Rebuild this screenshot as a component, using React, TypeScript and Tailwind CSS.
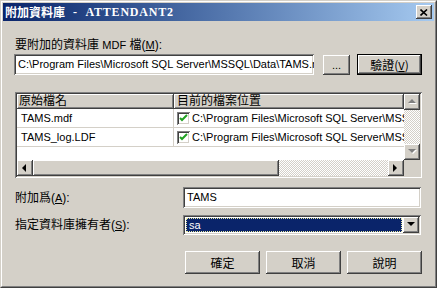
import React from "react";

const raised =
  "bg-[#d4d0c8] shadow-[inset_-1px_-1px_0_#404040,inset_1px_1px_0_#ffffff,inset_-2px_-2px_0_#808080]";
const sunken =
  "shadow-[inset_1px_1px_0_#808080,inset_-1px_-1px_0_#ffffff,inset_2px_2px_0_#404040,inset_-2px_-2px_0_#d4d0c8]";
const checker =
  "bg-[image:repeating-conic-gradient(#ffffff_0_25%,#d4d0c8_0_50%)] bg-[length:2px_2px]";

const font = { fontFamily: '"Liberation Sans", "Noto Sans CJK TC", sans-serif' };

function Arrow({ dir, gray }: { dir: "up" | "down" | "left" | "right"; gray?: boolean }) {
  const pts: Record<string, string> = {
    up: "0,4 4,0 8,4",
    down: "0,0 8,0 4,4",
    left: "4,0 4,8 0,4",
    right: "0,0 0,8 4,4",
  };
  const w = dir === "up" || dir === "down" ? 8 : 5;
  const h = dir === "up" || dir === "down" ? 5 : 8;
  return (
    <svg width={w + 1} height={h + 1} viewBox={`0 0 ${w + 1} ${h + 1}`}>
      {gray && <polygon points={pts[dir]} fill="#ffffff" transform="translate(1,1)" />}
      <polygon points={pts[dir]} fill={gray ? "#808080" : "#000000"} />
    </svg>
  );
}

function Check() {
  return (
    <div className={`w-[13px] h-[13px] bg-white ${sunken} flex items-center justify-center shrink-0`}>
      <svg width="9" height="9" viewBox="0 0 9 9">
        <path d="M1 4 L3 6 L8 1" stroke="#21a121" strokeWidth="2" fill="none" />
      </svg>
    </div>
  );
}

export default function App() {
  const path = "C:\\Program Files\\Microsoft SQL Server\\MSSQL\\Data\\TAMS.mdf";
  return (
    <div
      className="w-[437px] h-[288px] bg-[#d4d0c8] border border-t-[#d4d0c8] border-l-[#d4d0c8] border-b-[#404040] border-r-[#404040] text-[12px] text-black overflow-hidden"
      style={font}
    >
      <div className="h-full border border-t-white border-l-white border-b-[#808080] border-r-[#808080] p-[1px]">
        {/* Title bar */}
        <div className="h-[18px] bg-linear-to-r from-[#0a246a] to-[#a6caf0] flex items-center pl-[2px] pr-[2px]">
          <span className="text-white font-bold text-[12px] leading-[18px] whitespace-nowrap" style={{ fontFamily: '"Noto Sans CJK TC", sans-serif' }}>
            附加資料庫
          </span>
          <span className="text-white font-bold text-[12px] leading-[18px] whitespace-nowrap ml-[8px] tracking-[0.8px]" style={{ fontFamily: '"Liberation Serif", serif' }}>
            -&nbsp;&nbsp;ATTENDANT2
          </span>
          <div className="flex-1" />
          <div className={`w-[16px] h-[14px] ${raised} flex items-center justify-center`}>
            <svg width="8" height="7" viewBox="0 0 8 7">
              <path d="M0.5 0.5 L7 6.5 M7 0.5 L0.5 6.5" stroke="#000" strokeWidth="1.6" />
            </svg>
          </div>
        </div>

        <div className="pl-[11px]">
          {/* label */}
          <div className="mt-[17px] pl-[1px] leading-[14px] h-[14px] whitespace-nowrap">
            要附加的資料庫 <span className="text-[11px]">MDF</span> 檔(<span className="underline text-[11px]">M</span>):
          </div>
          {/* path row */}
          <div className="mt-[2px] flex items-start">
            <div className={`w-[300px] h-[21px] bg-white ${sunken} overflow-hidden whitespace-nowrap pl-[4px] pt-[3px] leading-[15px] text-[11px]`}>
              {path}
            </div>
            <div className={`ml-[9px] mt-[1px] w-[27px] h-[20px] ${raised} flex items-center justify-center leading-[14px] text-[11px]`}>
              ...
            </div>
            <div className="ml-[7px] w-[65px] h-[21px] border border-black">
              <div className={`w-full h-full ${raised} flex items-center justify-center leading-[14px]`} style={{ fontFamily: '"Noto Sans CJK TC", "Liberation Sans", sans-serif' }}>
                驗證(<span className="underline text-[11px]">V</span>)
              </div>
            </div>
          </div>

          {/* list */}
          <div className={`mt-[17px] ml-[1px] w-[407px] h-[86px] bg-white ${sunken} p-[2px] flex flex-col`}>
            <div className="flex flex-1 min-h-0">
              <div className="flex-1 flex flex-col min-w-0 overflow-hidden">
                {/* header */}
                <div className="flex h-[15px] shrink-0">
                  <div className={`w-[157px] h-full ${raised} pl-[2px] leading-[15px] whitespace-nowrap`}>原始檔名</div>
                  <div className={`flex-1 h-full ${raised} pl-[3px] leading-[15px] whitespace-nowrap`}>目前的檔案位置</div>
                </div>
                {["TAMS.mdf", "TAMS_log.LDF"].map((n) => (
                  <div key={n} className="flex h-[19px] shrink-0 border-b border-[#d4d0c8] text-[11px]">
                    <div className="w-[157px] h-full border-r border-[#d4d0c8] pl-[4px] leading-[18px] whitespace-nowrap">{n}</div>
                    <div className="flex-1 h-full flex items-center pl-[3px] overflow-hidden whitespace-nowrap">
                      <Check />
                      <span className="ml-[2px] leading-[18px]">C:\Program Files\Microsoft SQL Server\MSSQL\Data\{n}</span>
                    </div>
                  </div>
                ))}
              </div>
              {/* vertical scrollbar */}
              <div className={`w-[16px] flex flex-col ${checker}`}>
                <div className={`h-[16px] ${raised} flex items-center justify-center`}>
                  <Arrow dir="up" gray />
                </div>
                <div className="flex-1" />
                <div className={`h-[16px] ${raised} flex items-center justify-center`}>
                  <Arrow dir="down" gray />
                </div>
              </div>
            </div>
            {/* horizontal scrollbar */}
            <div className="h-[16px] flex shrink-0">
              <div className={`flex-1 flex ${checker}`}>
                <div className={`w-[16px] h-full ${raised} flex items-center justify-center`}>
                  <Arrow dir="left" />
                </div>
                <div className={`w-[246px] h-full ${raised}`} />
                <div className="flex-1" />
                <div className={`w-[16px] h-full ${raised} flex items-center justify-center`}>
                  <Arrow dir="right" />
                </div>
              </div>
              <div className="w-[16px] h-full bg-[#d4d0c8]" />
            </div>
          </div>

          {/* attach as */}
          <div className="mt-[9px] flex items-center">
            <div className="w-[169px] pl-[1px] leading-[14px] whitespace-nowrap">
              附加爲(<span className="underline text-[11px]">A</span>):
            </div>
            <div className={`w-[238px] h-[21px] bg-white ${sunken} pl-[4px] pt-[3px] leading-[15px] text-[11px]`}>TAMS</div>
          </div>

          {/* owner */}
          <div className="mt-[7px] flex items-center">
            <div className="w-[169px] pl-[1px] leading-[14px] whitespace-nowrap">
              指定資料庫擁有者(<span className="underline text-[11px]">S</span>):
            </div>
            <div className={`w-[238px] h-[20px] bg-white ${sunken} p-[2px] flex`}>
              <div className="flex-1 p-[1px]">
                <div className="w-full h-full bg-[#0a246a] border border-dotted border-[#e8e8a0] text-white pl-[2px] leading-[12px] text-[11px]">sa</div>
              </div>
              <div className={`w-[16px] h-full ${raised} flex items-center justify-center`}>
                <Arrow dir="down" />
              </div>
            </div>
          </div>

          {/* buttons */}
          <div className="mt-[16px] flex pl-[171px] gap-[6px]" style={{ fontFamily: '"Noto Sans CJK TC", sans-serif' }}>
            {["確定", "取消", "說明"].map((b) => (
              <div key={b} className={`w-[75px] h-[23px] ${raised} flex items-center justify-center leading-[14px]`}>
                {b}
              </div>
            ))}
          </div>
        </div>
      </div>
    </div>
  );
}
